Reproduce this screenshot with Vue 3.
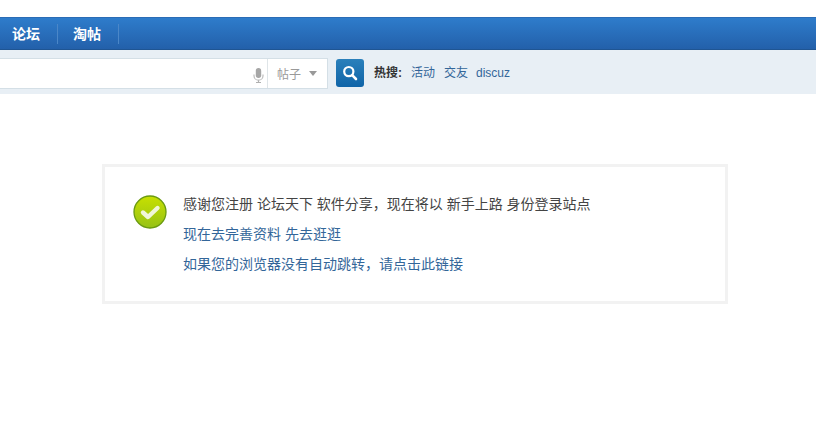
<template>
  <div class="page">
    <header class="nav">
      <a class="nav-item">论坛</a>
      <a class="nav-item">淘帖</a>
    </header>
    <div class="searchbar">
      <div class="search-field">
        <div class="mic-wrap">
          <svg class="mic" width="11" height="15" viewBox="0 0 11 15">
            <rect x="2.8" y="0" width="5.4" height="10" rx="2.7" fill="#a6a6a6" />
            <path d="M1 6.5v1.2a4.5 4.5 0 0 0 9 0V6.5" fill="none" stroke="#bcbcbc" stroke-width="1.2" />
            <path d="M5.5 12.2V14.5M3 14.5h5" fill="none" stroke="#b0b0b0" stroke-width="1.2" />
          </svg>
        </div>
        <div class="scope">
          <span>帖子</span>
          <i class="caret"></i>
        </div>
      </div>
      <button class="search-btn" type="button" aria-label="搜索">
        <svg width="16" height="16" viewBox="0 0 16 16">
          <circle cx="6.8" cy="6.6" r="4.6" fill="none" stroke="#fff" stroke-width="2.2" />
          <path d="M10.2 10.2l3.8 3.8" stroke="#fff" stroke-width="2.6" stroke-linecap="round" />
        </svg>
      </button>
      <div class="hot">
        <strong>热搜:</strong>
        <a>活动</a>
        <a>交友</a>
        <a>discuz</a>
      </div>
    </div>
    <main class="content">
      <section class="notice">
        <svg class="ok" width="34" height="34" viewBox="0 0 34 34">
          <defs>
            <linearGradient id="okg" x1="0" y1="0" x2="0" y2="1">
              <stop offset="0" stop-color="#c8e000" />
              <stop offset="1" stop-color="#96c216" />
            </linearGradient>
          </defs>
          <circle cx="17" cy="17" r="16" fill="url(#okg)" stroke="#6a9a10" stroke-width="1.3" />
          <path d="M10 17.5l5 4.5 9.5-9" fill="none" stroke="#f0f6d8" stroke-width="4.4" stroke-linecap="round" stroke-linejoin="round" />
        </svg>
        <div class="lines">
          <p class="dark">感谢您注册 论坛天下 软件分享，现在将以 新手上路 身份登录站点</p>
          <p><a>现在去完善资料</a> <a>先去逛逛</a></p>
          <p><a>如果您的浏览器没有自动跳转，请点击此链接</a></p>
        </div>
      </section>
    </main>
  </div>
</template>

<script setup>
</script>

<style>
html, body { margin: 0; background: #fff; overflow: hidden; }
</style>

<style scoped>
.page {
  width: 816px;
  height: 442px;
  padding-top: 17px;
  box-sizing: border-box;
  font-family: "Liberation Sans", "Noto Sans CJK SC", sans-serif;
  font-size: 12px;
  overflow: hidden;
}
.nav {
  height: 33px;
  box-sizing: border-box;
  display: flex;
  align-items: center;
  background: linear-gradient(#2e7ccb, #2360aa);
  border-top: 1px solid #2b6cb5;
  border-bottom: 1px solid #1f5593;
}
.nav-item {
  width: 45px;
  height: 20px;
  line-height: 20px;
  padding-left: 12px;
  font-size: 14px;
  font-weight: 700;
  color: #fff;
  border-right: 1px solid #4b87c8;
}
.nav-item + .nav-item {
  padding-left: 15px;
}
.searchbar {
  height: 44px;
  box-sizing: border-box;
  padding-top: 8px;
  display: flex;
  align-items: flex-start;
  background: #e8eff5;
}
.search-field {
  width: 328px;
  height: 31px;
  box-sizing: border-box;
  display: flex;
  justify-content: flex-end;
  background: #fff;
  border: 1px solid #d4dfe6;
  border-left: 0;
}
.mic-wrap {
  width: 18px;
  padding-top: 3px;
  display: flex;
  align-items: center;
  justify-content: center;
}
.scope {
  width: 60px;
  box-sizing: border-box;
  display: flex;
  align-items: center;
  padding-left: 9px;
  border-left: 1px solid #dfe5e8;
  color: #999;
}
.caret {
  margin-left: 8px;
  width: 0;
  height: 0;
  border: 4px solid transparent;
  border-top: 5px solid #999;
  border-bottom: 0;
}
.search-btn {
  margin: 1px 0 0 8px;
  width: 28px;
  height: 28px;
  padding: 0;
  display: flex;
  align-items: center;
  justify-content: center;
  border: 0;
  border-radius: 3px;
  background: linear-gradient(#2a80bb, #0f64a8);
}
.hot {
  margin: 6px 0 0 10px;
  display: flex;
  align-items: baseline;
  gap: 8px;
  line-height: 18px;
  color: #333;
}
.hot strong { width: 30px; margin-right: -1px; }
.hot a { color: #336699; }
.hot a:first-of-type { margin-right: 1px; }
.content { padding: 70px 88px 0 102px; }
.notice {
  height: 140px;
  box-sizing: border-box;
  display: flex;
  padding: 22px 0 0 28px;
  border: 3px solid #f2f2f2;
}
.ok { flex: none; margin-top: 6px; }
.lines { margin-left: 16px; font-size: 14px; line-height: 30px; }
.lines p { margin: 0; color: #336699; }
.lines p.dark { color: #444; }
</style>
